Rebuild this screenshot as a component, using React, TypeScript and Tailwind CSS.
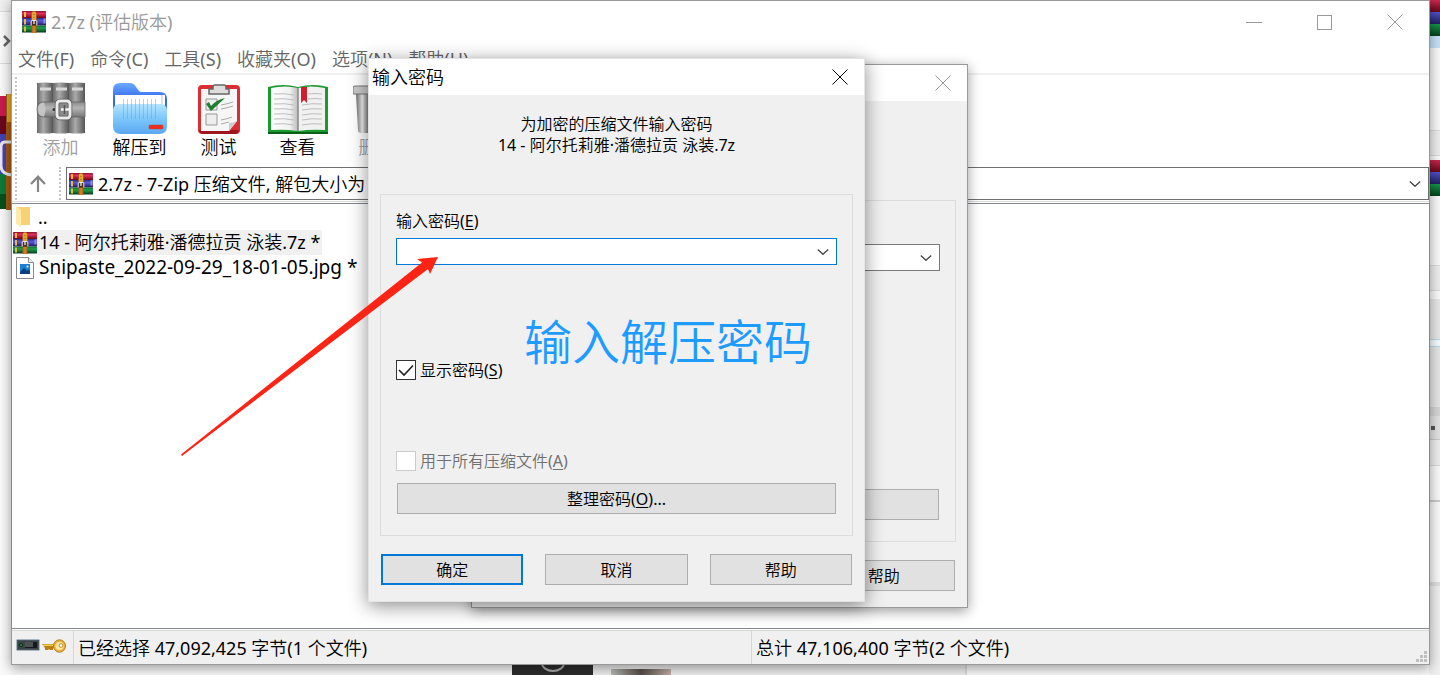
import React, {useId, useState} from 'react';

const BooksIcon: React.FC<{className?: string}> = ({className = 'w-6 h-[22px]'}) => {
    const id = useId();
    return (
        <svg viewBox="0 0 24 22" className={`shrink-0 ${className}`} aria-hidden="true">
            <defs>
                <linearGradient id={`${id}r`} x2="0" y2="1">
                    <stop offset="0" stopColor="#8a1230"/>
                    <stop offset=".35" stopColor="#e0305a"/>
                    <stop offset="1" stopColor="#6d0618"/>
                </linearGradient>
                <linearGradient id={`${id}b`} x2="0" y2="1">
                    <stop offset="0" stopColor="#2a2a80"/>
                    <stop offset=".35" stopColor="#5a5ad8"/>
                    <stop offset="1" stopColor="#1b1b58"/>
                </linearGradient>
                <linearGradient id={`${id}g`} x2="0" y2="1">
                    <stop offset="0" stopColor="#0d6b30"/>
                    <stop offset=".35" stopColor="#1fa04c"/>
                    <stop offset="1" stopColor="#04391a"/>
                </linearGradient>
            </defs>
            <rect y="0" width="24" height="7" rx=".6" fill={`url(#${id}r)`}/>
            <rect y="7" width="24" height="7.5" rx=".6" fill={`url(#${id}b)`}/>
            <rect y="14.5" width="24" height="7" rx=".6" fill={`url(#${id}g)`}/>
            <path d="M2 1h2v5H2zM2 8h2v5.5H2zM2 15.5h2v5H2z" fill="#e8b93c"/>
            <path d="M21.500 7.500h2v5h-2z" fill="#8f8fe8"/>
            <path d="M9.500 2.500Q9.500 0 12 0t2.500 2.500V22h-5z" fill="#a85a18"/>
            <path d="M9.800 2.500Q9.800 .4 12 .4t2.200 2.100V9.500H9.800z" fill="#dfa832"/>
            <path d="M12 3v.8M12 6v.8" stroke="#7a4a10"/>
            <path d="M10.500 15h3v7h-3z" fill="#cf7a24"/>
            <path d="M9.200 14.500v-4q0-1 1-1h3.600q1 0 1 1v4" fill="#4a2c14" stroke="#d8d8dc" strokeWidth="1.100"/>
            <path d="M12 9v4" stroke="#fff" strokeWidth="1.200"/>
        </svg>
    );
};

const AddIcon = () => (
    <svg viewBox="0 0 50 52" className="w-[50px] h-[52px]" aria-hidden="true">
        <defs>
            <linearGradient id="spine">
                <stop offset="0" stopColor="#6b6b6b"/>
                <stop offset=".4" stopColor="#aaa"/>
                <stop offset="1" stopColor="#565656"/>
            </linearGradient>
            <linearGradient id="strap" x2="0" y2="1">
                <stop offset="0" stopColor="#8b8b8b"/>
                <stop offset=".4" stopColor="#b5b5b5"/>
                <stop offset="1" stopColor="#777"/>
            </linearGradient>
        </defs>
        <path d="M1 1q8-1 16 0v50q-8 1-16 0z" fill="url(#spine)"/>
        <path d="M17 1q8-1 16 0v50q-8 1-16 0z" fill="url(#spine)"/>
        <path d="M33 1q8-1 16 0v50q-8 1-16 0z" fill="url(#spine)"/>
        <path d="M4 5.500h11v3H4zM20 5.500h11v3H20zM36 5.500h11v3H36z" fill="#d8d8d8"/>
        <path d="M8 20h41v15H8q-7 0-7-7.500T8 20z" fill="url(#strap)" stroke="#666" strokeWidth=".8"/>
        <path d="M8 20.500q-6 0-6 7t6 7q3-7 0-14" fill="#c4c4c4"/>
        <circle cx="18" cy="27.500" r="1.500" fill="#333"/>
        <rect x="21" y="19" width="13" height="17" rx="3" fill="#8a8a8a" stroke="#555" strokeWidth="4.500"/>
        <rect x="21" y="19" width="13" height="17" rx="3" fill="none" stroke="#ececec" strokeWidth="3"/>
        <path d="M25 27.500h9" stroke="#f5f5f5" strokeWidth="2.500"/>
        <path d="M28.500 23v9" stroke="#555" strokeWidth="1.500"/>
    </svg>
);

const ExtractIcon = () => (
    <svg viewBox="0 0 54 52" className="w-[54px] h-[52px]" aria-hidden="true">
        <defs>
            <linearGradient id="front" x2="0" y2="1">
                <stop offset="0" stopColor="#b5e4ff"/>
                <stop offset=".5" stopColor="#7cc6fb"/>
                <stop offset="1" stopColor="#5aa7f0"/>
            </linearGradient>
            <linearGradient id="back" x2="0" y2="1">
                <stop offset="0" stopColor="#6aa9ff"/>
                <stop offset=".4" stopColor="#3468f0"/>
            </linearGradient>
        </defs>
        <path d="M0 8q0-7 7-7h10q4 0 6 4l3 4q1 1 3 1h18q7 0 7 7v26H0z" fill="url(#back)"/>
        <path d="M2 13h50v16H2z" fill="#fff"/>
        <path d="M49 13v14" stroke="#b7c4d6"/>
        <path d="M0 28q0-5 6-6h42q6 1 6 6v16q0 8-8 8H8q-8 0-8-8z" fill="url(#front)"/>
        <path d="M10.500 17v20M14.500 17v20M18.500 17v20M22.500 17v20M26.500 17v20M30.500 17v20M34.500 17v20M38.500 17v20M42.500 17v20" stroke="#5f9bd0" strokeOpacity=".45"/>
        <rect x="36" y="43" width="14" height="4" rx=".8" fill="#f02e1c" stroke="#b6523f" strokeWidth=".5"/>
    </svg>
);

const TestIcon = () => (
    <svg viewBox="0 0 42 50" className="w-[42px] h-[50px]" aria-hidden="true">
        <rect y="1" width="42" height="49" rx="4" fill="#de2d32"/>
        <path d="M1 46h40q-1 4-4 4H5q-3 0-4-4z" fill="#9e151b"/>
        <path d="M3 5h36v32L31 47H3z" fill="#f6f6f6"/>
        <path d="M39 37l-8 10q0-7 0-8 4 0 8-2z" fill="#ccc"/>
        <path d="M15 5V3q0-2 2-2h9q2 0 2 2v2h3v5H11V5z" fill="#ddd" stroke="#666" strokeWidth="1.500"/>
        <path d="M8 15h11v11H8zM8 30h11v11H8z" fill="#eee" stroke="#999"/>
        <path d="M23 21q6-1 12-3M23 25q6-1 12-3M23 36q6-1 11-3M23 40q4-1 8-2" fill="none" stroke="#aaa"/>
        <path d="M8 20l5 7L27 14q-9 2-14 8l-2-4z" fill="#1d7d30"/>
    </svg>
);

const ViewIcon = () => (
    <svg viewBox="0 0 60 50" className="w-[60px] h-[50px]" aria-hidden="true">
        <defs>
            <linearGradient id="page">
                <stop offset="0" stopColor="#fff"/>
                <stop offset=".7" stopColor="#f0f0f0"/>
                <stop offset="1" stopColor="#bbb"/>
            </linearGradient>
        </defs>
        <path d="M0 3q15-4 30 0 15-4 30 0v47H0z" fill="#1a9a2c"/>
        <path d="M0 48h60v2H0z" fill="#0c5f19"/>
        <path d="M3 4q14-3 27 0v43q-13-2-27-1z" fill="url(#page)"/>
        <path d="M57 4q-14-3-27 0v43q13-2 27-1z" fill="#f1f1f1"/>
        <path d="M30 4v43" stroke="#888" strokeWidth="1.500"/>
        <path d="M6 10q11-1 20 1M6 15q11-1 20 1M6 20q11-1 20 1M6 25q11-1 20 1M6 30q11-1 20 1M6 35q11-1 20 1M6 40q11-1 20 1M40 10q7-1 14 0M40 15q7-1 14 0M34 21q10-2 20-1M34 26q10-2 20-1M34 31q10-2 20-1M34 36q10-2 20-1M34 41q10-2 20-1" fill="none" stroke="#bdbdbd"/>
        <path d="M33 3h6v16l-3-3-3 3z" fill="#cf1f2c"/>
    </svg>
);

const DeleteIcon = () => (
    <svg viewBox="0 0 48 52" className="w-12 h-[52px]" aria-hidden="true">
        <defs>
            <linearGradient id="bin">
                <stop offset="0" stopColor="#6e6e6e"/>
                <stop offset=".15" stopColor="#eee"/>
                <stop offset=".3" stopColor="#777"/>
                <stop offset="1" stopColor="#bbb"/>
            </linearGradient>
        </defs>
        <path d="M3 12h42l-2 36q0 3-3 3H8q-3 0-3-3z" fill="url(#bin)"/>
        <path d="M16 4V0h16v4h14q2 0 2 2v6H0V6q0-2 2-2z" fill="#c9c9c9" stroke="#777"/>
    </svg>
);

const FolderIcon = () => (
    <svg viewBox="0 0 16 22" className="w-4 h-[22px] shrink-0" aria-hidden="true">
        <path d="M2 1h12v18H5z" fill="#f8d272"/>
        <path d="M0 0l5 4v17l-5-3z" fill="#fde9a9"/>
    </svg>
);

const ImageFileIcon = () => (
    <svg viewBox="0 0 18 22" className="w-[18px] h-[22px] shrink-0" aria-hidden="true">
        <path d="M.5.5h12l5 5v16H.5z" fill="#fff" stroke="#8a8a8a"/>
        <path d="M12.500.5v5h5" fill="#eee" stroke="#8a8a8a"/>
        <path d="M4 7h10v10H4z" fill="#1b7fd6"/>
        <path d="M4 15l4-4 3 3 1.500-1.500L14 14v3H4z" fill="#0c3f7e"/>
        <circle cx="11.500" cy="9.500" r="1" fill="#fff"/>
    </svg>
);

const DriveIcon = () => (
    <svg viewBox="0 0 24 12" className="w-6 h-3" aria-hidden="true">
        <rect x=".5" y=".5" width="23" height="11" rx="1" fill="#4a575e" stroke="#a9b8c0"/>
        <path d="M2 2h20v8H2z" fill="#3a4347"/>
        <circle cx="5" cy="6" r="1.500" fill="#3f8f45" stroke="#0d2a10"/>
        <path d="M9 3h12v6H9z" fill="#16191b"/>
        <path d="M9 3h8v5H9z" fill="#4c5154"/>
    </svg>
);

const KeyIcon = () => (
    <svg viewBox="0 0 24 14" className="w-6 h-3.5" aria-hidden="true">
        <path d="M0 5h13v4h-2v2H8l-1-1-1 1H3V9z" fill="#b98014"/>
        <path d="M1 5.500h13v1.500H1z" fill="#f3cf5b"/>
        <ellipse cx="17.500" cy="7" rx="6" ry="6.200" fill="#e9b444" stroke="#b77c1a"/>
        <circle cx="17.500" cy="7" r="4" fill="#fbe6a4"/>
        <circle cx="19" cy="6.500" r="1.800" fill="#fff" stroke="#c38b28"/>
    </svg>
);

const CloseIcon = () => (
    <svg viewBox="0 0 16 16" className="w-4 h-4" aria-hidden="true">
        <path d="M.5.5l15 15M15.500.5l-15 15" stroke="currentColor" strokeWidth="1"/>
    </svg>
);

const Chevron = () => (
    <svg viewBox="0 0 12 6" className="w-3 h-1.5 absolute right-[7px] top-1/2 -translate-y-1/2 pointer-events-none" aria-hidden="true">
        <path d="M.8.5L6 5.300 11.200.5" fill="none" stroke="#444" strokeWidth="1.300"/>
    </svg>
);

const menus = ['文件(F)', '命令(C)', '工具(S)', '收藏夹(O)', '选项(N)', '帮助(H)'];

const tools = [
    {label: '添加', icon: <AddIcon/>, disabled: true},
    {label: '解压到', icon: <ExtractIcon/>},
    {label: '测试', icon: <TestIcon/>},
    {label: '查看', icon: <ViewIcon/>},
    {label: '删除', icon: <DeleteIcon/>, disabled: true},
];

const Key: React.FC<{char: string}> = ({char}) => (
    <>(<span className="underline underline-offset-2">{char}</span>)</>
);

const CheckRow: React.FC<{
    label: string;
    hotkey: string;
    checked: boolean;
    disabled?: boolean;
    onChange?: () => void;
}> = ({label, hotkey, checked, disabled, onChange}) => (
    <label className={`flex items-center gap-1 h-5 leading-5 ${disabled ? 'text-[#707070]' : 'text-black'}`}>
        <span className="relative flex">
            <input
                type="checkbox"
                checked={checked}
                disabled={disabled}
                onChange={() => onChange?.()}
                className={`appearance-none w-5 h-5 bg-white border ${disabled ? 'border-[#ccc]' : 'border-[#333]'}`}
            />
            {checked && (
                <svg viewBox="0 0 20 20" className="absolute inset-0 w-5 h-5 pointer-events-none" aria-hidden="true">
                    <path d="M3 10l5 5L17 5.500" fill="none" stroke="#222" strokeWidth="1.600"/>
                </svg>
            )}
        </span>
        <span>{label}<Key char={hotkey}/></span>
    </label>
);

const PasswordDialog: React.FC<{active?: boolean; className: string}> = ({active = false, className}) => {
    const [showPassword, setShowPassword] = useState(true);
    const fieldId = useId();
    const pushButton = 'h-[31px] bg-[#e1e1e1] text-center';

    return (
        <section
            className={`absolute w-[497px] bg-[#f0f0f0] text-base text-black ${className}`}>
            <header className="h-9 bg-white flex items-center justify-between pl-[3px] pr-4">
                <h2 className="text-lg leading-9">{active && '输入密码'}</h2>
                <button aria-label="关闭" className={active ? 'text-black' : 'text-[#999]'}><CloseIcon/></button>
            </header>
            <div className="px-[11px] pb-4">
                <p className="h-[99px] pt-[19px] text-center leading-[21px]">
                    {active && <>为加密的压缩文件输入密码<br/>14 - 阿尔托莉雅·潘德拉贡 泳装.7z</>}
                </p>
                <div className="h-[342px] border border-[#dcdcdc] px-[15px] pt-4 pb-[21px] flex flex-col">
                    <label htmlFor={fieldId} className="h-5 leading-5">{active && <>输入密码<Key char="E"/></>}</label>
                    <div className={`relative mt-[7px] h-[27px] bg-white border ${active ? 'border-[#0078d7]' : 'border-[#7a7a7a]'}`}>
                        <select
                            id={fieldId}
                            aria-label="密码"
                            className="appearance-none block w-full h-full outline-none"
                        />
                        <Chevron/>
                    </div>
                    {active && (
                        <div className="flex-1 flex flex-col justify-between pt-[95px] pb-3">
                            <CheckRow label="显示密码" hotkey="S" checked={showPassword}
                                      onChange={() => setShowPassword(!showPassword)}/>
                            <CheckRow label="用于所有压缩文件" hotkey="A" checked={false} disabled/>
                        </div>
                    )}
                    <button className={`${pushButton} mt-auto mx-px border border-[#adadad]`}>
                        {active && <>整理密码<Key char="O"/>...</>}
                    </button>
                </div>
                <div className="mt-[18px] px-px grid grid-cols-3 gap-[22px]">
                    <button className={`${pushButton} border-2 border-[#0078d7]`}>{active && '确定'}</button>
                    <button className={`${pushButton} border border-[#adadad]`}>{active && '取消'}</button>
                    <button className={`${pushButton} border border-[#adadad]`}>帮助</button>
                </div>
            </div>
        </section>
    );
};

const ArchiveWindow = () => (
    <main
        className="absolute left-[11px] right-[10px] top-0 bottom-[10px] flex flex-col bg-white border border-[#999] shadow-[0_3px_12px_rgba(0,0,0,0.4)]">
        <header className="h-[42px] shrink-0 flex items-center pl-2.5 text-[#999]">
            <BooksIcon/>
            <h1 className="ml-[5px] text-lg">2.7z (评估版本)</h1>
            <div className="ml-auto flex items-center gap-[55px] pr-[26px]">
                <button aria-label="最小化" className="w-4 h-4 flex items-center">
                    <span className="w-full border-t border-[#999]"></span>
                </button>
                <button aria-label="最大化" className="w-[15px] h-[15px] border border-[#999]"></button>
                <button aria-label="关闭"><CloseIcon/></button>
            </div>
        </header>

        <nav className="h-8 shrink-0 flex items-center gap-4 pt-0.5 pl-1.5 border-b-2 border-[#f0f0f0] text-lg text-[#666]">
            {menus.map((menu) => (
                <button key={menu} className="whitespace-nowrap">{menu}</button>
            ))}
        </nav>

        {/* Toolbar */}
        <div className="h-[90px] shrink-0 flex pl-[3px]">
            <div className="border-l-2 border-dotted border-[#c4c4c4] my-0.5 mr-1"></div>
            {tools.map(({label, icon, disabled}) => (
                <button key={label} disabled={disabled}
                        className={`w-[79px] shrink-0 flex flex-col items-center text-lg ${disabled ? 'text-[#a0a0a0]' : 'text-black'}`}>
                    <span className="h-[59px] flex items-end">{icon}</span>
                    <span className="leading-[26px]">{label}</span>
                </button>
            ))}
        </div>

        {/* Address bar */}
        <div className="h-[37px] shrink-0 flex pl-[3px] pt-0.5 pb-px border-b border-[#ddd]">
            <div className="border-l-2 border-dotted border-[#c4c4c4]"></div>
            <button aria-label="上一级" className="w-[42px] flex items-center justify-center">
                <svg viewBox="0 0 18 18" className="w-[18px] h-[18px]" aria-hidden="true">
                    <path d="M9 17V2M2 9l7-7.300L16 9" fill="none" stroke="#858585" strokeWidth="2.200"/>
                </svg>
            </button>
            <div className="border-l-2 border-dotted border-[#c4c4c4] mr-[5px]"></div>
            <div className="relative flex-1 flex items-center border border-[#707070] pl-0.5">
                <BooksIcon/>
                <select aria-label="路径" className="appearance-none flex-1 min-w-0 h-full pl-[5px] text-lg outline-none">
                    <option>2.7z - 7-Zip 压缩文件, 解包大小为</option>
                </select>
                <Chevron/>
            </div>
        </div>

        {/* File list */}
        <ul className="flex-1 min-h-0 mt-px border border-[#828790] -mx-px text-lg">
            <li className="h-[26px] pl-1 flex items-center gap-1.5">
                <FolderIcon/>
                <span>..</span>
            </li>
            <li className="h-[25px] pl-px flex items-center">
                <BooksIcon/>
                <span className="h-full px-0.5 leading-[25px] bg-[#f0f0f0]">14 - 阿尔托莉雅·潘德拉贡 泳装.7z *</span>
            </li>
            <li className="h-[25px] pl-1 flex items-center gap-[5px]">
                <ImageFileIcon/>
                <span className="text-[19px] leading-[25px]">Snipaste_2022-09-29_18-01-05.jpg *</span>
            </li>
        </ul>

        <footer className="h-[34px] shrink-0 flex mt-px border-t border-[#d7d7d7] bg-[#f0f0f0] text-lg text-black relative">
            <div className="w-[62px] border-r border-[#d7d7d7] flex pt-2 pl-1 gap-0.5">
                <DriveIcon/>
                <KeyIcon/>
            </div>
            <div className="flex-1 pl-1 leading-[34px] border-r border-[#d7d7d7]">已经选择 47,092,425 字节(1 个文件)</div>
            <div className="flex-1 pl-1 leading-[34px]">总计 47,106,400 字节(2 个文件)</div>
            <svg viewBox="0 0 11 11" className="absolute right-0.5 bottom-0.5 w-[11px] h-[11px]" aria-hidden="true">
                <path d="M8 0h3v3H8zM8 4h3v3H8zM8 8h3v3H8zM4 4h3v3H4zM4 8h3v3H4zM0 8h3v3H0z" fill="#bfbfbf"/>
            </svg>
        </footer>
    </main>
);

const BookEdge = () => (
    <>
        <div className="h-3 bg-linear-to-b from-[#c8284e] to-[#64091c]"></div>
        <div className="h-3 bg-linear-to-b from-[#5353c9] to-[#202060]"></div>
        <div className="h-3 bg-linear-to-b from-[#17964a] to-[#06401c]"></div>
    </>
);

// Slivers of the windows that lie behind the archive window
const Desktop = () => (
    <div className="absolute inset-0 flex justify-between bg-[#fafafa]" aria-hidden="true">
        <div className="w-3 flex flex-col">
            <div className="h-3 bg-[#f0f0f0] border-b border-[#ddd]"></div>
            <div className="h-[52px] flex items-center pt-[7px] border-b border-[#ddd]">
                <svg viewBox="0 0 12 12" className="w-3 h-3">
                    <path d="M4 1l5 5-5 5" fill="none" stroke="#666" strokeWidth="2.500"/>
                </svg>
            </div>
            <div className="h-[30px]"></div>
            <svg viewBox="0 0 12 116" className="w-3 h-[116px]">
                <path d="M0 2h12v38H0z" fill="#c81c4c"/>
                <path d="M0 22h12v18H0z" fill="#6b0820"/>
                <path d="M0 40h12v40H0z" fill="#4343b4"/>
                <path d="M0 80h12v35H0z" fill="#0d7a38"/>
                <path d="M0 100h12v15H0z" fill="#06501f"/>
                <path d="M6 0h6v116H6z" fill="#a45a16"/>
                <path d="M7 0h5v28H7z" fill="#dda52c"/>
                <path d="M12 48H5q-4 0-4 5v19q0 8 11 9" fill="none" stroke="#e8e8ee" strokeWidth="3"/>
            </svg>
        </div>
        <div className="flex-1 self-end h-3 flex">
            <div className="ml-[500px] w-[81px] bg-[#2d2d2d] flex justify-center">
                <svg viewBox="0 0 26 12" className="w-[26px] h-3">
                    <path d="M2 0a11 8 0 0 0 22 0" fill="none" stroke="#aaa" strokeWidth="2"/>
                </svg>
            </div>
            <div className="w-[374px] bg-[#eee] border-r-2 border-[#ddd] flex items-end pl-[18px]">
                <div className="w-[60px] h-1.5 bg-linear-to-r from-[#b9bdb5] via-[#574d49] to-[#c5aea6]"></div>
            </div>
        </div>
        <div className="w-[11px] flex flex-col">
            <BookEdge/>
            <div className="h-3 bg-[#c6e2f7]"></div>
            <div className="h-[82px]"></div>
            <div className="h-[26px] bg-[#eee] border-y border-[#ddd]"></div>
            <div className="h-1"></div>
            <BookEdge/>
            <div className="h-[69px]"></div>
            <div className="h-[26px] bg-[#eee] border-y border-[#ddd]"></div>
            <div className="h-2"></div>
            <div className="h-10 bg-[#e8e8e8]"></div>
            <div className="h-2 bg-[#f5fbff] border-y border-[#b6dcec]"></div>
            <div className="h-[60px] bg-[#e6e6e6]"></div>
            <div className="h-[9px] bg-[#d5d5d5]"></div>
            <div className="h-6 bg-[#e3e3e3] border-b border-[#ccc] flex items-center">
                <span className="w-1 h-1 ml-0.5 bg-[#555]"></span>
            </div>
            <div className="h-[26px] bg-[#eee] border-b border-[#ddd]"></div>
            <div className="h-9 border-b-2 border-[#ccc]"></div>
            <div className="h-20"></div>
            <div className="flex-1 bg-[#f0f0f0] border-t-4 border-[#e0e0e0]"></div>
        </div>
    </div>
);

const App: React.FC = () => (
    <div
        className="relative min-h-screen overflow-hidden font-['Noto_Sans','Noto_Sans_CJK_SC_DemiLight','Noto_Sans_CJK_SC',sans-serif]">
        <Desktop/>
        <ArchiveWindow/>
        <PasswordDialog className="left-[471px] top-16 border border-[#999] shadow-[0_3px_12px_rgba(0,0,0,0.4)]"/>
        <PasswordDialog active
                        className="left-[368px] top-[58px] border border-[#e4e4e4] shadow-[0_4px_18px_rgba(0,0,0,0.45)]"/>

        {/* Annotations */}
        <svg viewBox="0 0 258 199" className="absolute left-[181px] top-[257px] w-[258px] h-[199px] pointer-events-none" aria-hidden="true">
            <path d="M0 197.500L241 5.500 236 2 257 0 249 17 247 12 1 199z" fill="#fc2414"/>
        </svg>
        <p className="absolute left-[524px] top-[307px] text-5xl leading-[70px] font-[350] text-[#1e9bff] whitespace-nowrap pointer-events-none">
            输入解压密码
        </p>
    </div>
);

export default App;
